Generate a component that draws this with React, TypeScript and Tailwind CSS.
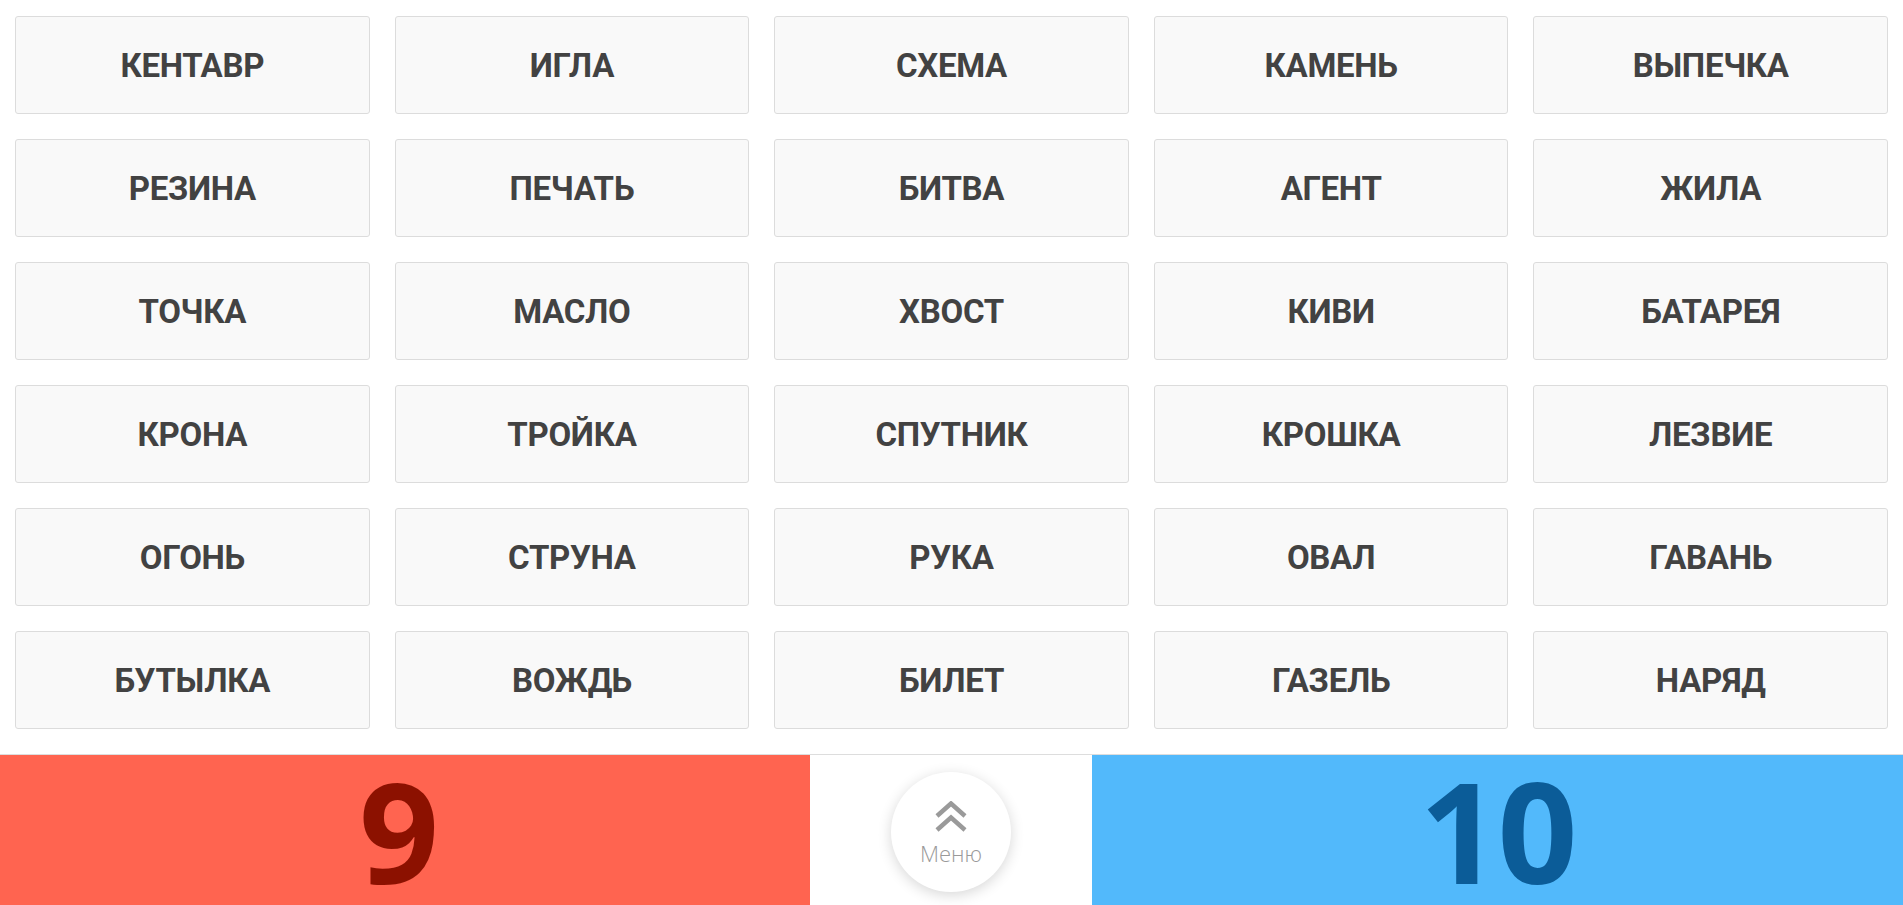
import React from 'react';

const words = [
  'КЕНТАВР', 'ИГЛА', 'СХЕМА', 'КАМЕНЬ', 'ВЫПЕЧКА',
  'РЕЗИНА', 'ПЕЧАТЬ', 'БИТВА', 'АГЕНТ', 'ЖИЛА',
  'ТОЧКА', 'МАСЛО', 'ХВОСТ', 'КИВИ', 'БАТАРЕЯ',
  'КРОНА', 'ТРОЙКА', 'СПУТНИК', 'КРОШКА', 'ЛЕЗВИЕ',
  'ОГОНЬ', 'СТРУНА', 'РУКА', 'ОВАЛ', 'ГАВАНЬ',
  'БУТЫЛКА', 'ВОЖДЬ', 'БИЛЕТ', 'ГАЗЕЛЬ', 'НАРЯД',
];

const WordCard = ({ word }: { word: string }) => (
  <div className="h-[98px] flex items-center justify-center rounded-[3px] border border-[#dcdcdc] bg-[#f9f9f9] text-[#424242] font-['Roboto',sans-serif] font-bold text-[33px] tracking-[-0.3px] pt-[2px]">
    {word}
  </div>
);

const App = () => {
  return (
    <div className="h-screen flex flex-col bg-white overflow-hidden">
      <div className="grid grid-cols-5 gap-x-[25px] gap-y-[25px] px-[15px] pt-[16px]">
        {words.map((w) => (
          <WordCard key={w} word={w} />
        ))}
      </div>

      {/* score bar */}
      <div className="mt-auto h-[151px] flex border-t border-[#dddddd]">
        <div className="w-[810px] bg-[#ff6450] flex items-center justify-center pr-[12px] font-['Open_Sans',sans-serif] font-bold text-[140px] leading-[150px] text-[#8c1100]">
          <span>9</span>
        </div>
        <div className="flex-1 bg-white flex items-center justify-center">
          <button className="w-[120px] h-[120px] rounded-full bg-white shadow-[0_3px_14px_rgba(0,0,0,0.16)] flex flex-col items-center justify-center text-[#9a9a9a] font-['Open_Sans',sans-serif] mt-[4px]">
            <svg width="34" height="32" viewBox="0 0 34 32" fill="none" stroke="#9a9a9a" strokeWidth="4.5">
              <path d="M3 15 L17 2.5 L31 15" />
              <path d="M3 29 L17 16.5 L31 29" />
            </svg>
            <span className="font-light text-[22px] leading-none mt-[9px]">Меню</span>
          </button>
        </div>
        <div className="w-[811px] bg-[#52b9fb] flex items-center justify-center font-['Open_Sans',sans-serif] font-bold text-[140px] leading-[150px] text-[#0b5c98]">
          <span className="tracking-[-2px]">10</span>
        </div>
      </div>
    </div>
  );
};

export default App;
